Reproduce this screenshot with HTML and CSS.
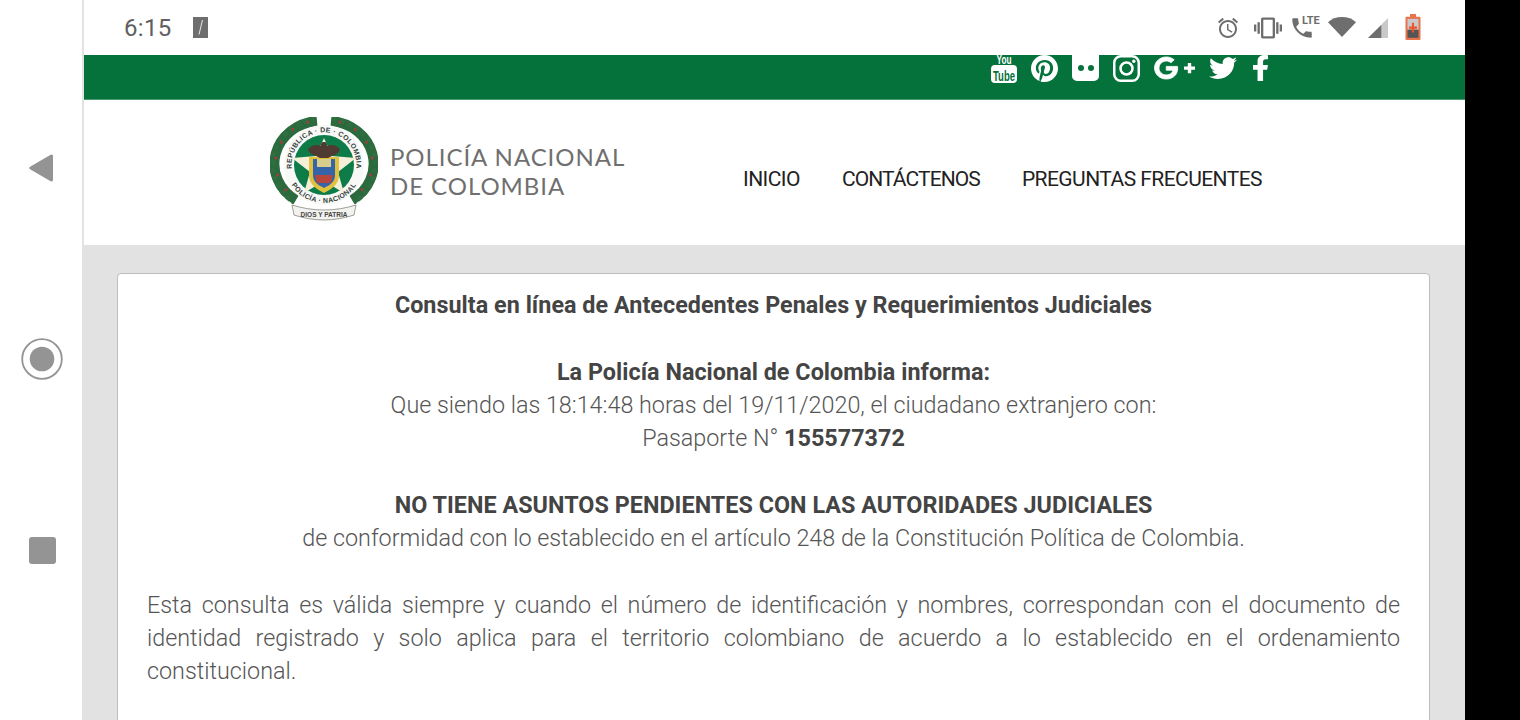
FILE: index.html
```html
<!DOCTYPE html>
<html lang="es">
<head>
<meta charset="utf-8">
<title>Consulta de Antecedentes</title>
<link rel="stylesheet" href="styles.css">
</head>
<body>
<div class="device">
  <aside class="rail">
    <svg class="rail-back" width="26" height="30" viewBox="0 0 26 30"><path class="rail-fill" d="M25 3v24a1.500 1.500 0 0 1-2.300 1.300L2 16.300a1.500 1.500 0 0 1 0-2.600L22.700 1.700A1.500 1.500 0 0 1 25 3z"/></svg>
    <svg class="rail-home" width="42" height="42" viewBox="0 0 42 42"><circle class="rail-ring" cx="21" cy="21" r="19.800"/><circle class="rail-fill" cx="21" cy="21" r="12.300"/></svg>
    <div class="rail-recent"></div>
  </aside>
  <main class="screen">
    <div class="statusbar">
      <div class="status-left">
        <span class="time">6:15</span>
        <svg width="15" height="21" viewBox="0 0 15 21"><rect class="st" width="15" height="21"/><path d="M6 17.500L9.500 3" stroke="#e8e8e8" stroke-width="1" fill="none"/></svg>
      </div>
      <div class="status-right">
        <svg class="si-alarm" width="24" height="24" viewBox="0 0 24 24"><path class="st" d="M22 5.720l-4.600-3.860-1.290 1.530 4.600 3.860L22 5.720zM7.880 3.390L6.600 1.860 2 5.710l1.290 1.530 4.590-3.850zM12.500 8H11v6l4.750 2.850.75-1.230-4-2.370V8zM12 4c-4.970 0-9 4.030-9 9s4.030 9 9 9 9-4.030 9-9-4.030-9-9-9zm0 16c-3.870 0-7-3.130-7-7s3.130-7 7-7 7 3.130 7 7-3.130 7-7 7z"/></svg>
        <svg class="si-vib" width="28" height="28" viewBox="0 0 24 24"><path class="st" d="M0 15h2V9H0v6zm3 2h2V7H3v10zm19-8v6h2V9h-2zm-3 8h2V7h-2v10zM16.500 3h-9C6.670 3 6 3.670 6 4.500v15c0 .830.670 1.500 1.500 1.500h9c.830 0 1.500-.670 1.500-1.500v-15c0-.830-.670-1.500-1.500-1.500zM16 19H8V5h8v14z"/></svg>
        <span class="call">
          <svg width="26" height="26" viewBox="0 0 24 24"><path class="st" d="M6.620 10.790c1.440 2.830 3.760 5.140 6.590 6.590l2.200-2.200c.270-.270.670-.360 1.020-.240 1.120.370 2.330.570 3.570.570.550 0 1 .450 1 1V20c0 .550-.450 1-1 1-9.390 0-17-7.610-17-17 0-.550.450-1 1-1h3.500c.550 0 1 .450 1 1 0 1.250.200 2.450.570 3.570.110.350.030.740-.250 1.020l-2.200 2.200z"/></svg>
          <span class="lte">LTE</span>
        </span>
        <svg class="si-wifi" width="28" height="20" viewBox="0 0 28 21" preserveAspectRatio="none"><path class="st" d="M14 21L0 5.500C3.500 2 8.500 0 14 0s10.500 2 14 5.500z"/></svg>
        <svg class="si-sig" width="20" height="20" viewBox="0 0 21 20" preserveAspectRatio="none"><path class="st-light" d="M21 0v20H0z"/><path class="st" d="M14 7v13H0z"/></svg>
        <svg class="si-bat" width="16" height="26" viewBox="0 0 16 24" preserveAspectRatio="none"><path d="M5 0h6v2.500h3.500a1 1 0 0 1 1 1V23a1 1 0 0 1-1 1H1.500a1 1 0 0 1-1-1V3.500a1 1 0 0 1 1-1H5z" fill="#e8734d"/><rect x="2.500" y="4.500" width="11" height="10" fill="#c9c9c9"/><rect x="2.500" y="14.500" width="11" height="7.500" fill="#555"/><path d="M7 8h2v3.500h3v2H9V17H7v-3.500H4v-2h3z" fill="#f0522b"/></svg>
      </div>
    </div>
    <div class="greenbar">
      <div class="socials">
        <svg width="26" height="28" viewBox="0 0 26 28">
          <text class="yt-you" x="13" y="9" textLength="15" lengthAdjust="spacingAndGlyphs">You</text>
          <rect class="w" x="0" y="10" width="26" height="18" rx="4"/>
          <text class="yt-tube" x="13" y="25.500" textLength="22" lengthAdjust="spacingAndGlyphs">Tube</text>
        </svg>
        <svg width="27" height="27" viewBox="0 8 496 496" preserveAspectRatio="none"><path class="w" d="M496 256c0 137-111 248-248 248-25.600 0-50.200-3.900-73.400-11.100 10.100-16.500 25.200-43.500 30.800-65 3-11.600 15.400-59 15.400-59 8.100 15.400 31.700 28.500 56.800 28.500 74.800 0 128.700-68.800 128.700-154.300 0-81.900-66.900-143.200-152.900-143.200-107 0-163.900 71.800-163.900 150.100 0 36.400 19.400 81.700 50.300 96.100 4.700 2.200 7.200 1.200 8.300-3.300.800-3.400 5-20.300 6.900-28.100.600-2.500.300-4.700-1.700-7.100-10.100-12.500-18.300-35.300-18.300-56.600 0-54.700 41.400-107.600 112-107.600 60.900 0 103.600 41.500 103.600 100.900 0 67.100-33.900 113.600-78 113.600-24.300 0-42.600-20.100-36.700-44.800 7-29.500 20.500-61.300 20.500-82.600 0-19-10.200-34.900-31.400-34.900-24.900 0-44.900 25.700-44.900 60.200 0 22 7.400 36.800 7.400 36.800s-24.500 103.800-29 123.200c-5 21.400-3 51.600-.900 71.200C65.400 450.900 0 361.100 0 256 0 119 111 8 248 8s248 111 248 248z"/></svg>
        <svg width="27" height="26" viewBox="0 0 27 26"><path class="w" fill-rule="evenodd" d="M0 0h27v21a5 5 0 0 1-5 5H5a5 5 0 0 1-5-5zM9 10a3 3 0 1 0 0 6 3 3 0 0 0 0-6zm10 0a3 3 0 1 0 0 6 3 3 0 0 0 0-6z"/></svg>
        <svg width="27" height="27" viewBox="0 0 27 27"><rect x="1.250" y="1.250" width="24.500" height="24.500" rx="6.500" fill="none" stroke="#fff" stroke-width="2.500"/><circle cx="13.500" cy="13.500" r="6" fill="none" stroke="#fff" stroke-width="2.500"/><circle cx="20.800" cy="6.200" r="1.700" fill="#fff"/></svg>
        <svg width="41" height="26" viewBox="0 0 41 26"><g transform="translate(.5 1.600) scale(.0475 .0445)"><path class="w g-heavy" d="M488 261.800C488 403.300 391.100 504 248 504 110.800 504 0 393.200 0 256S110.800 8 248 8c66.800 0 123 24.500 166.300 64.900l-67.500 64.900C258.500 52.600 94.300 116.600 94.300 256c0 86.500 69.100 156.600 153.700 156.600 98.200 0 135-70.400 140.800-106.900H248v-85.300h236.100c2.300 12.700 3.900 24.900 3.900 41.400z"/></g><path class="w" d="M33.800 8h3.400v3.500H41v3.200h-3.800v3.500h-3.400v-3.500H30v-3.200h3.800z"/></svg>
        <svg class="ic-tw" width="28" height="22" viewBox="0 0 512 420" preserveAspectRatio="none"><g transform="translate(0 -44)"><path class="w" d="M459.370 151.716c.325 4.548.325 9.097.325 13.645 0 138.720-105.583 298.558-298.558 298.558-59.452 0-114.680-17.219-161.137-47.106 8.447.974 16.568 1.299 25.340 1.299 49.055 0 94.213-16.568 130.274-44.832-46.132-.975-84.792-31.188-98.112-72.772 6.498.974 12.995 1.624 19.818 1.624 9.421 0 18.843-1.300 27.614-3.573-48.081-9.747-84.143-51.980-84.143-102.985v-1.299c13.969 7.797 30.214 12.670 47.431 13.319-28.264-18.843-46.781-51.005-46.781-87.391 0-19.492 5.197-37.360 14.294-52.954 51.655 63.675 129.300 105.258 216.365 109.807-1.624-7.797-2.599-15.918-2.599-24.040 0-57.828 46.782-104.934 104.934-104.934 30.213 0 57.502 12.670 76.670 33.137 23.715-4.548 46.456-13.320 66.599-25.340-7.798 24.366-24.366 44.833-46.132 57.827 21.117-2.273 41.584-8.122 60.426-16.243-14.292 20.791-32.161 39.308-52.628 54.253z"/></g></svg>
        <svg class="ic-fb" width="15" height="26" viewBox="22 0 272 512" preserveAspectRatio="none"><path class="w" d="M279.140 288l14.220-92.660h-88.910v-60.130c0-25.350 12.420-50.060 52.240-50.060h40.420V6.260S260.430 0 225.360 0c-73.220 0-121.080 44.380-121.080 124.720v70.620H22.890V288h81.390v224h100.170V288z"/></svg>
      </div>
    </div>
    <header class="topnav">
      <div class="brand">
        <svg class="seal" width="108" height="104" viewBox="0 0 108 104">
          <defs>
            <filter id="soft"><feGaussianBlur stdDeviation=".45"/></filter>
            <path id="ringtop" d="M23.500 59A32.500 32.500 0 1 1 84.500 59"/>
            <path id="ringbot" d="M16 48A38 38 0 0 0 92 48"/>
          </defs>
          <g filter="url(#soft)">
            <path class="wr-base" d="M47 4A47 43 0 0 0 26 83"/>
            <path class="wr-base" d="M61 4A47 43 0 0 1 82 83"/>
            <path class="wr-leaf" d="M46 2A51 46 0 0 0 24 85"/>
            <path class="wr-leaf" d="M62 2A51 46 0 0 1 84 85"/>
            <path class="wr-berry" d="M38 5A47 43 0 0 0 24 80"/>
            <path class="wr-berry" d="M70 5A47 43 0 0 1 84 80"/>
            <circle class="ring" cx="54" cy="48" r="40"/>
            <circle class="disc" cx="54" cy="48" r="30"/>
            <path class="star" d="M54 21l8 18 24 2-18 14 6 21-20-12-20 12 6-21-18-14 24-2z"/>
            <path class="sh-y" d="M39 40h30v18c0 10-8 14-15 18-7-4-15-8-15-18z"/>
            <path class="sh-b" d="M43 42h22v16c0 7-5 10-11 13-6-3-11-6-11-13z"/>
            <rect class="sh-c" x="47" y="42" width="14" height="8"/>
            <path class="sh-r" d="M45 58h18l-2 8H47z"/>
            <path class="eagle" d="M54 25c-3 0-3 2-3 4-5-2-9-1-13 3 1 4 4 6 8 7l4 2h8l4-2c4-1 7-3 8-7-4-4-8-5-13-3 0-2 0-4-3-4z"/>
            <path class="banner" d="M22 88c10 3 20 5 32 5s22-2 32-5l-2 10c-9 3-20 5-30 5s-21-2-30-5z"/>
          </g>
          <text class="seal-t"><textPath href="#ringtop" startOffset="50%">REPÚBLICA · DE · COLOMBIA</textPath></text>
          <text class="seal-t"><textPath href="#ringbot" startOffset="50%">POLICÍA · NACIONAL</textPath></text>
          <text class="seal-d" x="54" y="100">DIOS Y PATRIA</text>
        </svg>
        <div class="brand-name">POLICÍA NACIONAL<br>DE COLOMBIA</div>
      </div>
      <nav class="links">
        <a href="#">INICIO</a>
        <a class="tight" href="#">CONTÁCTENOS</a>
        <a href="#">PREGUNTAS FRECUENTES</a>
      </nav>
    </header>
    <section class="content">
      <article class="card">
        <p class="center"><b>Consulta en línea de Antecedentes Penales y Requerimientos Judiciales</b></p>
        <p class="center"><b>La Policía Nacional de Colombia informa:</b><br>Que siendo las 18:14:48 horas del 19/11/2020, el ciudadano extranjero con:<br>Pasaporte N° <b>155577372</b></p>
        <p class="center"><b>NO TIENE ASUNTOS PENDIENTES CON LAS AUTORIDADES JUDICIALES</b><br>de conformidad con lo establecido en el artículo 248 de la Constitución Política de Colombia.</p>
        <p class="just">Esta consulta es válida siempre y cuando el número de identificación y nombres, correspondan con el documento de identidad registrado y solo aplica para el territorio colombiano de acuerdo a lo establecido en el ordenamiento constitucional.</p>
      </article>
    </section>
  </main>
  <div class="blackout"></div>
</div>
</body>
</html>
```
FILE: styles.css
```css
* { box-sizing: border-box; }
html, body { margin: 0; height: 720px; overflow: hidden; background: #fff; }
.device { display: flex; width: 1520px; height: 720px; overflow: hidden; font-family: Roboto, "Liberation Sans", sans-serif; }

.rail { flex: 0 0 84px; height: 720px; border-right: 2px solid #e2e2e2; padding-top: 153px; display: flex; flex-direction: column; background: #fff; }
.rail-fill { fill: #949494; }
.rail-ring { fill: none; stroke: #949494; stroke-width: 1.800; }
.rail-back { margin-left: 28px; flex: none; }
.rail-home { margin-left: 21px; margin-top: 155px; flex: none; }
.rail-recent { width: 27px; height: 27px; margin-left: 29px; margin-top: 157px; border-radius: 3px; background: #949494; flex: none; }

.screen { flex: 0 0 1381px; height: 720px; overflow: hidden; display: flex; flex-direction: column; background: #e2e2e2; }
.blackout { flex: 1; background: #000; }

.statusbar { flex: 0 0 55px; background: #fff; display: flex; justify-content: space-between; align-items: center; padding: 0 44px 0 40px; }
.status-left { display: flex; align-items: center; gap: 22px; }
.time { font-size: 24px; color: #5f5f5f; letter-spacing: .3px; }
.status-right { display: flex; align-items: center; }
.si-vib { margin-left: 14px; }
.call { position: relative; display: block; width: 31px; height: 26px; margin-left: 7px; }
.si-wifi { margin-left: 8px; margin-top: -2px; }
.si-sig { margin-left: 12px; }
.si-bat { margin-left: 17px; margin-top: -2px; }
.st { fill: #6e6e6e; }
.st-light { fill: #c9c9c9; }
.lte { position: absolute; left: 13px; top: -1px; font-size: 11px; font-weight: 700; color: #6e6e6e; }

.greenbar { flex: 0 0 45px; background: #04723a; border-bottom: 1px solid #4c9a70; overflow: hidden; display: flex; align-items: flex-start; padding-left: 907px; }
.socials { display: flex; gap: 14px; align-items: flex-start; }
.w { fill: #fff; }
.g-heavy { stroke: #fff; stroke-width: 18; }
.ic-tw { margin-top: 2px; }
.ic-fb { margin-left: 2px; }
.yt-you, .yt-tube { font-family: "Liberation Sans", sans-serif; font-weight: 700; text-anchor: middle; }
.yt-you { font-size: 12px; fill: #fff; }
.yt-tube { font-size: 15px; fill: #04723a; }

.topnav { flex: 0 0 145px; background: #fff; display: flex; align-items: center; padding-left: 186px; }
.brand { display: flex; align-items: center; gap: 12px; width: 473px; margin-top: -7px; }
.seal { flex: none; }
.wr-base { fill: none; stroke: #2c6a3d; stroke-width: 10; }
.wr-leaf { fill: none; stroke: #2f6e41; stroke-width: 5; stroke-dasharray: 5 3; }
.wr-berry { fill: none; stroke: #a33c3c; stroke-width: 3; stroke-linecap: round; stroke-dasharray: 0 17; }
.ring { fill: #f8f8f6; }
.disc { fill: #0d7c4a; }
.star { fill: #f3efd8; }
.sh-y { fill: #e2c23c; }
.sh-b { fill: #3565a8; }
.sh-c { fill: #d8cd8a; }
.sh-r { fill: #b5473c; }
.eagle { fill: #4f3b32; }
.banner { fill: #f2f2ef; stroke: #85857f; stroke-width: .8; }
.seal-t { font-family: "Liberation Sans", sans-serif; font-size: 7px; font-weight: 700; fill: #33413a; text-anchor: middle; letter-spacing: .35px; }
.seal-d { font-family: "Liberation Sans", sans-serif; font-size: 6.500px; font-weight: 700; fill: #444; text-anchor: middle; }
.brand-name { font-family: Lato, "Open Sans", sans-serif; font-size: 24px; line-height: 29px; color: #6f6f6f; letter-spacing: .95px; white-space: nowrap; margin-top: 4px; }
.links { display: flex; gap: 42px; margin-top: 12px; }
.links a { font-size: 21px; font-weight: 400; color: #222; text-decoration: none; letter-spacing: -.55px; white-space: nowrap; }
.links a.tight { letter-spacing: -.9px; }

.content { flex: 1; padding: 28px 35px 0 33px; }
.card { background: #fff; border: 1px solid #bdbdbd; border-radius: 4px 4px 0 0; padding: 15px 29px 30px; height: 600px; font-size: 23.330px; line-height: 33.300px; font-weight: 300; color: #555; }
.card p { margin: 0 0 33.300px; }
.card b { font-weight: 700; color: #444; letter-spacing: .034px; }
.center { text-align: center; }
.just { text-align: justify; }
```
